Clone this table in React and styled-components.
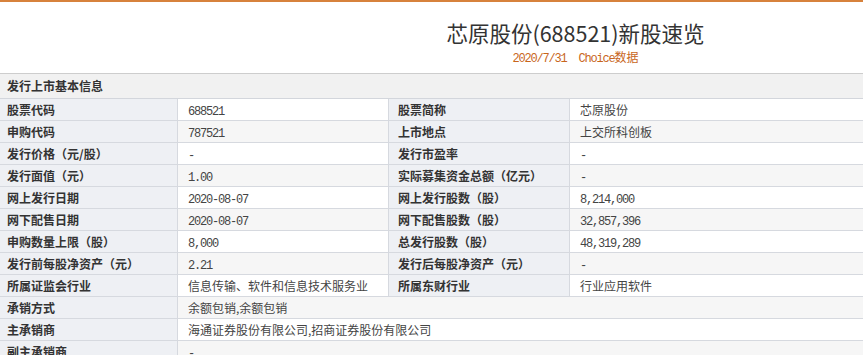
import React from "react";
import styled, { createGlobalStyle } from "styled-components";

const GlobalStyle = createGlobalStyle`
  body {
    margin: 0;
    background: #fff;
    font-family: "Noto Sans CJK SC", "Liberation Sans", sans-serif;
  }
`;

const rows = [
  ["股票代码", "688521", "股票简称", "芯原股份"],
  ["申购代码", "787521", "上市地点", "上交所科创板"],
  ["发行价格（元/股）", "-", "发行市盈率", "-"],
  ["发行面值（元）", "1.00", "实际募集资金总额（亿元）", "-"],
  ["网上发行日期", "2020-08-07", "网上发行股数（股）", "8,214,000"],
  ["网下配售日期", "2020-08-07", "网下配售股数（股）", "32,857,396"],
  ["申购数量上限（股）", "8,000", "总发行股数（股）", "48,319,289"],
  ["发行前每股净资产（元）", "2.21", "发行后每股净资产（元）", "-"],
  ["所属证监会行业", "信息传输、软件和信息技术服务业", "所属东财行业", "行业应用软件"],
  ["承销方式", "余额包销,余额包销"],
  ["主承销商", "海通证券股份有限公司,招商证券股份有限公司"],
  ["副主承销商", "-"],
];

const isNum = (v) => /^[\d,.\-\/ ]+$/.test(v);

const show = (v) => (isNum(v) ? <Num>{v}</Num> : v);

export default function App() {
  return (
    <Page>
      <GlobalStyle />
      <TopBar>
        <Title>芯原股份(688521)新股速览</Title>
        <Source>
          <Num>{"2020/7/31  Choice"}</Num>数据
        </Source>
      </TopBar>
      <Section>
        <SectionHead>发行上市基本信息</SectionHead>
        <Grid>
          {rows.map((r, i) => {
            const shade = i % 2 === 1;
            if (r.length === 2) {
              return (
                <React.Fragment key={i}>
                  <Label>{r[0]}</Label>
                  <Value $shade={shade} $wide>
                    {show(r[1])}
                  </Value>
                </React.Fragment>
              );
            }
            return (
              <React.Fragment key={i}>
                <Label>{r[0]}</Label>
                <Value $shade={shade}>{show(r[1])}</Value>
                <Label $right>{r[2]}</Label>
                <Value $shade={shade}>{show(r[3])}</Value>
              </React.Fragment>
            );
          })}
        </Grid>
      </Section>
    </Page>
  );
}

const Page = styled.div`
  width: 863px;
  height: 355px;
  overflow: hidden;
`;

const TopBar = styled.div`
  border-top: 2px solid #d7823c;
  height: 73px;
  box-sizing: border-box;
  padding: 17px 0 0 288px;
  display: flex;
  flex-direction: column;
  align-items: center;
`;

const Title = styled.div`
  font-size: 21.5px;
  line-height: 28px;
  color: #333;
  font-weight: 400;
`;

const Source = styled.div`
  margin-top: 2px;
  font-size: 12px;
  line-height: 16px;
  color: #c8661c;
`;

const Num = styled.span`
  font-family: "Liberation Mono", "DejaVu Sans Mono", monospace;
  font-size: 12px;
  letter-spacing: -1.2px;
  white-space: pre;
`;

const Section = styled.div`
  border-top: 1px solid #cdcdcd;
`;

const SectionHead = styled.div`
  height: 24px;
  line-height: 24px;
  padding-left: 7px;
  background: #f1f1f1;
  font-size: 12px;
  font-weight: 700;
  color: #333;
  border-bottom: 1px solid #d3d6dc;
`;

const Grid = styled.div`
  display: grid;
  grid-template-columns: 177px 210px 180px 1fr;
  grid-auto-rows: 21px;
  gap: 1px;
  background: #d6d9df;
`;

const Label = styled.div`
  background: #eef0f4;
  padding-left: ${(p) => (p.$right ? "9px" : "7px")};
  font-size: 12px;
  font-weight: 700;
  line-height: 21px;
  color: #333;
  white-space: nowrap;
`;

const Value = styled.div`
  grid-column: ${(p) => (p.$wide ? "span 3" : "auto")};
  background: ${(p) => (p.$shade ? "#f6f6f6" : "#fff")};
  padding-left: 10px;
  font-size: 12px;
  line-height: 21px;
  color: #444;
  white-space: nowrap;
`;
